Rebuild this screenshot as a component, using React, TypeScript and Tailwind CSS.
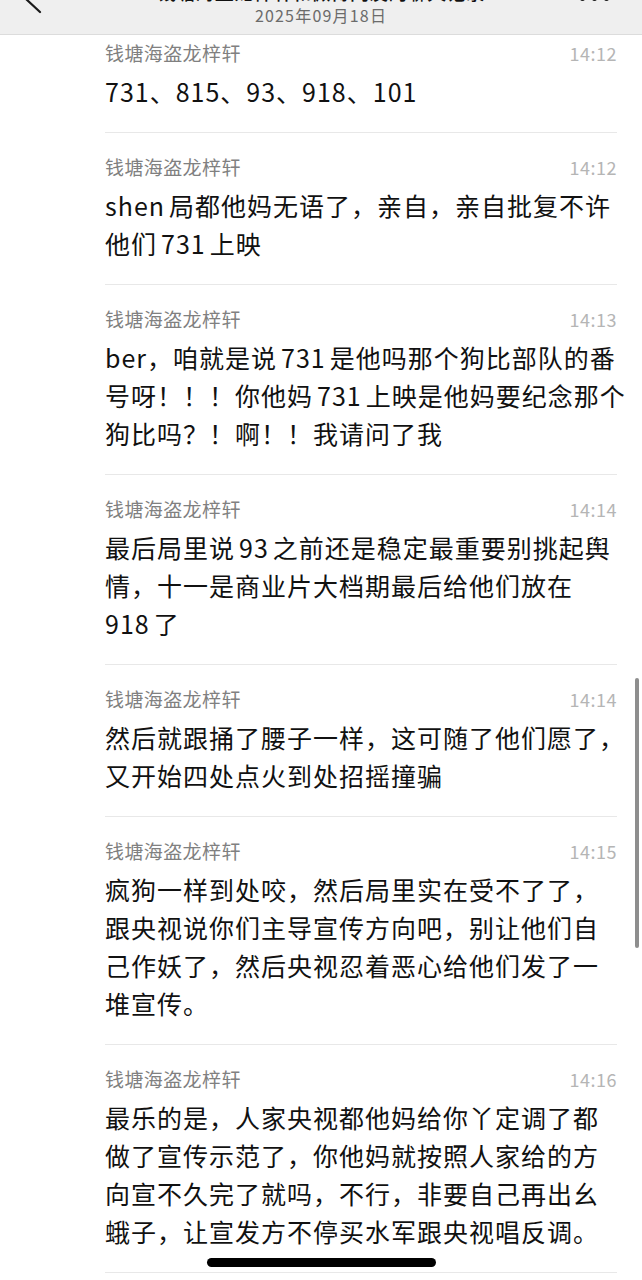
const messages = [
  { time: "14:12", lines: ["731、815、93、918、101"] },
  { time: "14:12", lines: ["shen局都他妈无语了，亲自，亲自批复不许", "他们731上映"] },
  {
    time: "14:13",
    lines: [
      "ber，咱就是说731是他吗那个狗比部队的番",
      "号呀！！！你他妈731上映是他妈要纪念那个",
      "狗比吗？！啊！！我请问了我",
    ],
  },
  {
    time: "14:14",
    lines: [
      "最后局里说93之前还是稳定最重要别挑起舆",
      "情，十一是商业片大档期最后给他们放在",
      "918了",
    ],
  },
  {
    time: "14:14",
    lines: ["然后就跟捅了腰子一样，这可随了他们愿了，", "又开始四处点火到处招摇撞骗"],
  },
  {
    time: "14:15",
    lines: [
      "疯狗一样到处咬，然后局里实在受不了了，",
      "跟央视说你们主导宣传方向吧，别让他们自",
      "己作妖了，然后央视忍着恶心给他们发了一",
      "堆宣传。",
    ],
  },
  {
    time: "14:16",
    lines: [
      "最乐的是，人家央视都他妈给你丫定调了都",
      "做了宣传示范了，你他妈就按照人家给的方",
      "向宣不久完了就吗，不行，非要自己再出幺",
      "蛾子，让宣发方不停买水军跟央视唱反调。",
    ],
  },
];

const isHan = (c: string | undefined) => !!c && /[\u4e00-\u9fff]/.test(c);

// iOS puts a little air between Han characters and latin runs
const Line = ({ text }: { text: string }) => {
  const parts = text.split(/([A-Za-z0-9]+)/);
  let pos = 0;
  return (
    <div className="whitespace-nowrap">
      {parts.map((p, i) => {
        const start = pos;
        pos += p.length;
        if (i % 2 === 0) return <span key={i}>{p}</span>;
        const before = isHan(text[start - 1]);
        const after = isHan(text[start + p.length]);
        return (
          <span key={i} className={`${before ? "ml-[4px]" : ""} ${after ? "mr-[4px]" : ""}`}>
            {p}
          </span>
        );
      })}
    </div>
  );
};

export default function App() {
  return (
    <div className="relative h-[1280px] overflow-hidden bg-white font-['Noto_Sans_CJK_SC',sans-serif]">
      {/* header, scrolled so the title is mostly cut off */}
      <div className="relative h-[35px] bg-[#efefef] border-b border-[#dcdcdc] flex flex-col items-center overflow-hidden">
        <div className="-mt-[18px] text-[19px] leading-[20px] font-medium text-[#111] tracking-[0.3px]">
          钱塘海盗龙梓轩和微博网友的聊天记录
        </div>
        <div className="mt-[2px] text-[16px] leading-[22px] text-[#6b6b6b] tracking-[1.2px]">
          2025年09月18日
        </div>
        <svg
          className="absolute left-[22px] -top-[16px]"
          width="22"
          height="32"
          viewBox="0 0 22 32"
          fill="none"
          stroke="#1a1a1a"
          strokeWidth="2.2"
          strokeLinecap="round"
          strokeLinejoin="round"
        >
          <path d="M18 2 L4 15 L18 28" />
        </svg>
        <div className="absolute left-[580px] -top-[4px] flex gap-[7px]">
          <span className="w-[5px] h-[5px] rounded-full bg-[#1a1a1a]" />
          <span className="w-[5px] h-[5px] rounded-full bg-[#1a1a1a]" />
          <span className="w-[5px] h-[5px] rounded-full bg-[#1a1a1a]" />
        </div>
      </div>

      <div className="pl-[105px] pr-[25px]">
        {messages.map((m, i) => (
          <div
            key={i}
            className={`${i === 0 ? "pt-[6px]" : "pt-[22px]"} pb-[22px] border-b border-[#e8e8e8]`}
          >
            <div className="flex justify-between items-center h-[24px]">
              <span className="text-[19px] leading-[24px] text-[#808080] tracking-[0.4px]">
                钱塘海盗龙梓轩
              </span>
              <span className="text-[18px] leading-[24px] text-[#b5b5b5] tracking-[0.5px]">
                {m.time}
              </span>
            </div>
            <div className="mt-[7px] text-[25px] leading-[38px] text-[#111] tracking-[1px]">
              {m.lines.map((l, j) => (
                <Line key={j} text={l} />
              ))}
            </div>
          </div>
        ))}
      </div>

      {/* scroll indicator */}
      <div className="absolute right-[3px] top-[678px] w-[4px] h-[270px] rounded-full bg-[#8e8e8e]" />
      {/* home indicator */}
      <div className="absolute left-[207px] top-[1258px] w-[229px] h-[9px] rounded-full bg-black" />
    </div>
  );
}
